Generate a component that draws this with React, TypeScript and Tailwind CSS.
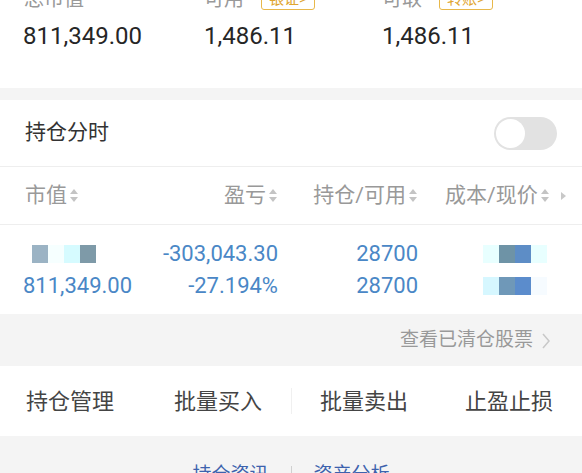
const cjk = { fontFamily: 'Roboto, "Noto Sans CJK SC", sans-serif' }

function SortArrows() {
  return (
    <svg width="10" height="15" viewBox="0 0 10 15" className="ml-[2px] shrink-0">
      <path d="M5 1 L9 6 L1 6 Z" fill="#c4c4c4" />
      <path d="M5 14 L9 9 L1 9 Z" fill="#c4c4c4" />
    </svg>
  )
}

function Badge({ text }: { text: string }) {
  return (
    <span className="ml-[17px] inline-flex h-[22px] items-center rounded-[3px] border border-[#e8b84a] px-[7px] text-[15px] leading-none text-[#e0a52e]">
      {text}&gt;
    </span>
  )
}

function Blur({ cells }: { cells: string[] }) {
  return (
    <div className="flex">
      {cells.map((c, i) => (
        <span key={i} className="h-[18px] w-[16px]" style={{ backgroundColor: c }} />
      ))}
    </div>
  )
}

export default function App() {
  return (
    <div className="h-[473px] w-[582px] overflow-hidden bg-[#f4f4f4]" style={cjk}>
      {/* account summary */}
      <div className="bg-white pb-[38px]">
        <div className="-mt-[13px] flex h-[24px] items-center pl-[24px] text-[20px] text-[#999]">
          <div className="w-[180px]">总市值</div>
          <div className="flex w-[178px] items-center">
            可用<Badge text="银证" />
          </div>
          <div className="flex items-center">
            可取<Badge text="转账" />
          </div>
        </div>
        <div className="mt-[11px] flex h-[28px] items-center pl-[23px] text-[24px] text-[#262626]">
          <div className="w-[181px]">811,349.00</div>
          <div className="w-[178px]">1,486.11</div>
          <div>1,486.11</div>
        </div>
      </div>

      <div className="h-[12px]" />

      {/* toggle row */}
      <div className="flex h-[67px] items-center justify-between border-b border-[#eeeeee] bg-white pl-[25px] pr-[25px]">
        <span className="text-[21px] text-[#333]">持仓分时</span>
        <span className="flex h-[33px] w-[63px] items-center rounded-full bg-[#e2e2e2] px-[2px]">
          <span className="h-[29px] w-[29px] rounded-full bg-white" />
        </span>
      </div>

      {/* table header */}
      <div className="grid h-[58px] grid-cols-[150px_128px_140px_164px] items-center border-b border-[#eeeeee] bg-white text-[21px] text-[#999]">
        <div className="flex items-center pl-[25px]">
          市值<SortArrows />
        </div>
        <div className="flex items-center justify-end">
          盈亏<SortArrows />
        </div>
        <div className="flex items-center justify-end">
          持仓/可用<SortArrows />
        </div>
        <div className="flex items-center pl-[27px]">
          成本/现价<SortArrows />
          <svg width="7" height="10" viewBox="0 0 7 10" className="ml-[10px]">
            <path d="M1 1 L6 5 L1 9 Z" fill="#c8c8c8" />
          </svg>
        </div>
      </div>

      {/* position rows */}
      <div className="bg-white pb-[12px] pt-[12px] text-[22px] text-[#4a87c6]">
        <div className="grid h-[32px] grid-cols-[150px_128px_140px_164px] items-center">
          <div className="pl-[32px]">
            <Blur cells={['#9bb3c4', '#f6ffff', '#d6fbff', '#7e9aa8']} />
          </div>
          <div className="text-right">-303,043.30</div>
          <div className="text-right">28700</div>
          <div className="flex pl-[65px]">
            <Blur cells={['#e8ffff', '#6e93a6', '#5d8dc6', '#e8ffff', '#ffffff']} />
          </div>
        </div>
        <div className="grid h-[33px] grid-cols-[150px_128px_140px_164px] items-center">
          <div className="pl-[23px]">811,349.00</div>
          <div className="text-right">-27.194%</div>
          <div className="text-right">28700</div>
          <div className="flex pl-[65px]">
            <Blur cells={['#d6f7ff', '#6f98b8', '#5b8ccc', '#f6fbff', '#ffffff']} />
          </div>
        </div>
      </div>

      {/* cleared stocks link */}
      <div className="flex h-[52px] items-center justify-end pr-[31px] pt-[1px] text-[19px] text-[#999]">
        查看已清仓股票
        <svg width="10" height="18" viewBox="0 0 10 18" className="ml-[8px]">
          <path d="M2 2 L8 9 L2 16" fill="none" stroke="#c8c8c8" strokeWidth="1.5" />
        </svg>
      </div>

      {/* actions */}
      <div className="flex h-[70px] items-center bg-white text-[22px] text-[#444]">
        <span className="ml-[26px]">持仓管理</span>
        <span className="ml-[60px]">批量买入</span>
        <span className="ml-[29px] h-[26px] w-px bg-[#f0f0f0]" />
        <span className="ml-[28px]">批量卖出</span>
        <span className="ml-[57px]">止盈止损</span>
      </div>

      {/* bottom links */}
      <div className="flex items-center justify-center pt-[27px] text-[19px] leading-[24px] text-[#3d62ad]">
        <span>持仓资讯</span>
        <span className="mx-[22px] h-[18px] w-px bg-[#d0d0d0]" />
        <span>资产分析</span>
      </div>
    </div>
  )
}
